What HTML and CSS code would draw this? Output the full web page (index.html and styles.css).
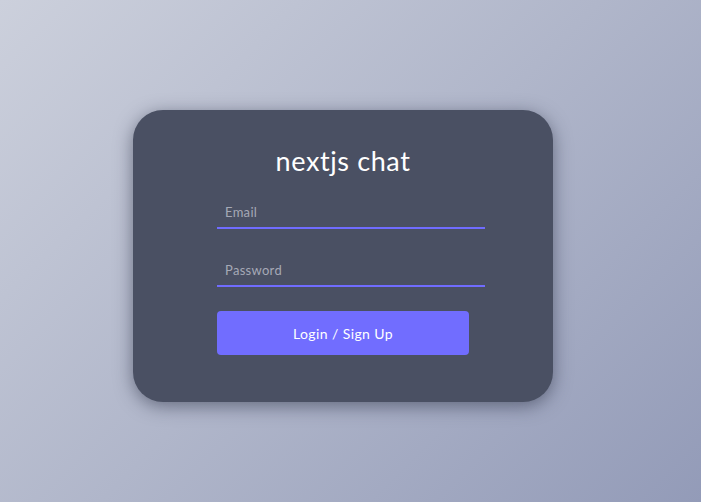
FILE: index.html
```html
<!DOCTYPE html>
<html>
<head>
<meta charset="utf-8">
<link rel="stylesheet" href="styles.css">
</head>
<body>
<main class="page">
  <section class="card">
    <h1 class="title">nextjs chat</h1>
    <form class="form">
      <input class="field" type="text" placeholder="Email">
      <input class="field" type="password" placeholder="Password">
      <button class="btn" type="button">Login / Sign Up</button>
    </form>
  </section>
</main>
</body>
</html>
```
FILE: styles.css
```css
* { box-sizing: border-box; }
html, body { margin: 0; height: 100%; }
body {
  font-family: Lato, "Noto Sans", sans-serif;
  background: linear-gradient(135deg, #ccd0dc 0%, #b0b6ca 50%, #939bb8 100%);
}
.page {
  min-height: 100vh;
  display: flex;
  align-items: center;
  justify-content: center;
  padding: 10px 15px 0 0;
}
.card {
  width: 420px;
  height: 292px;
  background: #4a5063;
  border-radius: 30px;
  box-shadow: 0 4px 18px rgba(40, 45, 65, 0.55);
  padding: 35px 68px 0 84px;
}
.title {
  margin: 0 0 0 -84px;
  width: 420px;
  text-align: center;
  color: #fff;
  font-weight: 400;
  font-size: 27px;
  letter-spacing: 0.6px;
  line-height: 32px;
}
.form {
  display: flex;
  flex-direction: column;
  margin-top: 20px;
}
.field {
  width: 268px;
  height: 32px;
  background: transparent;
  border: none;
  border-bottom: 2px solid #706cff;
  padding: 0 8px;
  font-family: inherit;
  font-size: 13px;
  letter-spacing: 0.3px;
  color: #fff;
  outline: none;
}
.field + .field { margin-top: 26px; }
.field::placeholder { color: #a6a9b6; }
.btn {
  margin-top: 24px;
  width: 252px;
  height: 44px;
  border: none;
  border-radius: 4px;
  background: #716dff;
  color: #fff;
  font-family: inherit;
  font-size: 14px;
  letter-spacing: 0.4px;
}
```
